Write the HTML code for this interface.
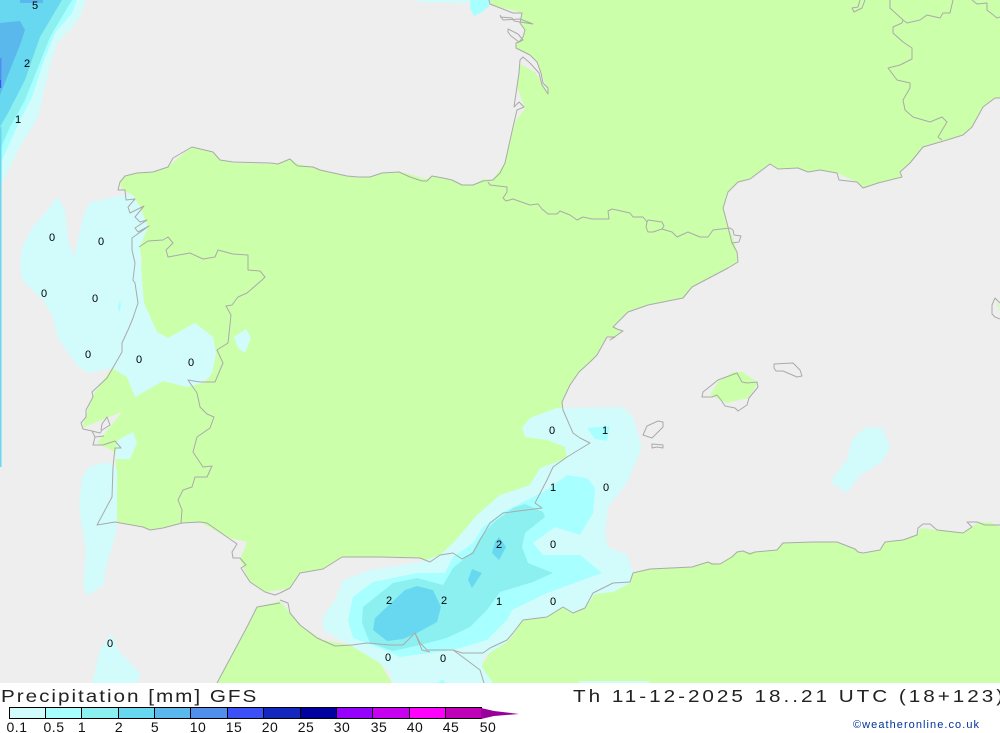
<!DOCTYPE html>
<html>
<head>
<meta charset="utf-8">
<title>Precipitation GFS</title>
<style>
html,body{margin:0;padding:0;background:#fff;width:1000px;height:733px;overflow:hidden}
svg{display:block}
.l{font:11px "Liberation Sans",sans-serif;fill:#000;text-anchor:middle}
.t{font:18px "Liberation Sans",sans-serif;fill:#222}
.k{font:14px "Liberation Sans",sans-serif;fill:#111;text-anchor:middle;letter-spacing:.5px}
.c{fill:none;stroke:#aaa;stroke-width:1;stroke-linejoin:round}
</style>
</head>
<body>
<svg width="1000" height="733" viewBox="0 0 1000 733" xmlns="http://www.w3.org/2000/svg">
<rect width="1000" height="733" fill="#fff"/>
<rect width="1000" height="683" fill="#eee"/>

<!-- land -->
<g fill="#cfa">
<path d="M490 0L492 6L512 10L522 13L520 23L525 30L523 37L519 42L516 43L516 48L530 55L536 60L543 78L549 93L535 72L520 64L517 87L525 108L515 122L508 150L505 163L492 180L483 179L473 185L462 185L452 180L443 178L432 176L427 179L422 178L410 174L399 172L382 173L370 177L358 178L347 176L320 170L313 167L298 164L290 159L279 164L233 163L220 160L213 152L192 147L178 158L168 167L153 172L137 173L125 176L120 182L122 190L133 195L140 207L148 227L139 245L142 260L140 270L142 280L144 303L157 332L168 338L195 323L213 337L216 353L212 373L205 382L187 387L163 381L135 397L127 377L112 368L93 395L82 428L122 412L97 443L115 452L117 480L117 522L143 527L150 530L163 528L182 523L200 522L227 537L247 542L240 560L250 582L265 592L280 590L290 588L300 573L323 569L342 557L380 557L420 558L430 562L440 555L453 553L462 559L473 553L480 540L490 523L503 513L542 508L535 503L547 480L553 467L567 457L590 443L580 438L573 433L563 410L562 402L570 385L579 372L590 362L597 355L607 337L615 337L623 331L613 327L628 312L648 305L683 298L692 287L728 268L738 262L737 252L734 240L727 223L724 208L728 192L738 182L750 179L770 164L778 169L798 168L808 172L820 170L837 173L857 182L863 188L878 183L902 177L900 172L910 163L923 147L947 140L963 135L972 127L983 107L995 98L1000 98L1000 0Z"/>
<path d="M217 683L257 607L280 601L290 613L300 625L323 640L350 645L380 663L392 683Z"/>
<path d="M1000 527L1000 683L483 683L482 665L490 652L507 640L513 633L523 620L547 617L563 607L573 613L585 608L593 593L613 583L630 577L635 572L650 569L692 567L708 562L720 564L737 552L755 552L777 550L783 543L813 542L837 542L857 550L863 554L880 550L885 542L903 540L917 534L921 528L937 530L963 533L972 527L977 523L990 522Z"/>
<path d="M710 395L718 382L733 372L743 372L758 383L748 398L727 403Z"/>
<path d="M996 302L999 304L1000 312Z"/>
</g>

<!-- rain: 0.1 -->
<g fill="#d2fbfb">
<path d="M0 0L86 0L80 17L70 30L57 43L48 73L38 117L20 147L7 173L0 187Z"/>
<path d="M58 197L65 210L68 240L74 257L83 217L90 202L125 195L133 195L140 208L148 227L140 247L142 280L144 303L157 332L168 338L195 323L213 337L216 353L212 373L203 383L187 387L163 381L135 397L127 377L112 368L87 373L77 365L57 337L53 317L43 300L22 280L20 263L22 247L33 227Z"/>
<path d="M234 337L246 329L251 338L245 353L238 348Z"/>
<path d="M118 440L133 432L137 443L130 459L115 459L117 445Z"/>
<path d="M88 468L100 463L112 463L117 470L117 520L115 537L107 563L103 585L88 596L83 587L86 553L79 507L82 477Z"/>
<path d="M112 633L118 650L140 673L138 683L92 683L100 650Z"/>
<path d="M833 478L847 460L853 438L867 427L882 428L890 447L882 462L860 475L847 493L832 483Z"/>
<path d="M522 428L530 418L557 408L623 407L633 417L642 447L627 483L608 507L605 533L608 547L627 555L633 572L630 583L613 592L595 594L585 608L573 613L563 607L547 617L523 620L513 635L507 642L483 657L482 667L493 683L392 683L390 672L380 663L350 645L323 630L323 617L335 600L343 580L370 570L420 562L440 555L453 543L467 527L477 515L500 495L530 485L540 468L567 458L565 447L547 440L525 437Z"/>
<path d="M415 0L470 0L465 3L420 2Z"/>
<path d="M578 683L650 683L648 681L580 681Z"/>
</g>

<!-- rain: 0.5 -->
<g fill="#a8ffff">
<path d="M0 0L77 0L72 13L55 33L43 63L32 97L20 120L2 160L0 165Z"/>
<path d="M470 0L491 0L489 6L482 12L474 16L470 8Z"/>
<path d="M120 300L121 306L119 312L118 306Z"/>
<path d="M587 428L610 426L607 441L595 439Z"/>
<path d="M567 475L587 478L595 488L593 513L580 535L555 527L533 543L543 555L580 555L602 573L547 593L512 610L507 620L487 640L453 650L400 657L380 648L353 638L348 620L353 597L373 582L417 573L445 573L453 557L473 543L483 527L503 512L533 497L547 490Z"/>
<path d="M438 683L442 679L446 683Z"/>
</g>

<!-- rain: 1 -->
<g fill="#8cf0f0">
<path d="M0 0L72 0L63 15L50 37L37 70L25 100L10 127L0 150Z"/>
<path d="M525 504L543 512L545 517L525 533L522 547L528 563L553 573L533 582L500 592L487 610L470 627L447 638L420 645L393 651L370 643L362 623L363 607L393 583L417 578L443 585L453 568L472 552L480 538L493 523L513 508Z"/>
</g>

<!-- rain: 2 -->
<g fill="#68d8f0">
<path d="M0 0L62 0L40 37L25 80L8 113L0 127Z"/>
<path d="M417 586L433 590L441 607L437 622L417 633L403 639L387 641L373 630L375 618L405 590Z"/>
<path d="M499 537L506 547L499 560L492 553L495 542Z"/>
<path d="M472 569L482 573L472 588L468 580Z"/>
<rect x="0" y="127" width="1.5" height="340"/>
</g>

<!-- rain: 5+ -->
<g fill="#5ab8ec">
<path d="M0 23L20 21L25 30L20 45L0 95Z"/>
<rect x="20" y="0" width="23" height="3"/>
</g>
<rect x="0" y="58" width="1.5" height="30" fill="#5090ec"/>
<rect x="0" y="80" width="1" height="8" fill="#3c50f8"/>

<!-- outlines -->
<g class="c">
<path d="M489 0L490 4L513 13L522 13L520 23L525 30L523 37L519 42L516 43L516 48L530 55L537 62L541 73L543 83L548 88L548 94L542 85L539 73L530 63L523 57L520 60L519 73L515 100L514 107L519 102L524 107L517 110L513 127L505 163L500 173L493 180L483 181L473 185L462 185L452 180L443 178L432 176L427 181L422 181L410 177L399 172L382 173L370 177L358 177L347 176L320 170L313 167L298 166L295 164L290 159L278 164L270 163L233 162L220 160L213 152L192 147L173 158L168 167L153 172L137 173L125 176L120 182L118 190L125 190L126 200L135 199L128 207L130 213L144 206L135 217L140 222L147 220L135 228L138 232L149 226L132 238L132 250L135 263L133 280L135 283L138 303L133 318L128 330L122 343L122 352L107 378L92 392L93 397L86 410L86 417L81 423L83 429L92 431L95 437L93 445L103 445L115 441L121 448L115 448L113 467L112 497L97 525L115 522L143 527L150 530L163 528L182 523L200 522L207 523L227 537L237 544L232 552L233 558L240 558L246 565L241 568L250 582L265 592L275 595L280 593L290 588L300 573L323 569L342 557L380 557L420 558L430 562L440 555L453 553L462 559L473 553L480 540L490 523L503 513L542 508L535 503L547 480L553 467L567 457L590 443L580 438L573 433L563 410L562 402L570 385L579 372L590 362L597 355L607 337L615 337L610 340L623 331L617 329L613 327L628 312L648 305L683 298L692 287L728 268L738 262L737 252L732 243L727 223L723 208L728 192L738 182L750 179L770 164L778 169L798 168L808 172L820 170L837 173L839 180L857 182L863 188L878 183L902 177L900 172L910 163L923 147L947 140L963 135L972 127L983 107L995 98L1000 98"/>
<path d="M92 431L100 433L102 430L110 425L107 417L102 424L101 430M95 437L104 436"/>
<path d="M139 247L148 241L163 240L168 237L173 243L166 250L168 257L190 253L203 259L215 257L218 250L233 254L248 255L248 270L260 271L265 277L262 280L247 293L238 297L232 305L226 306L231 315L228 343L217 350L223 363L215 382L200 382L188 380L197 393L200 407L207 414L214 417L210 428L197 437L193 452L203 467L212 466L207 477L195 477L192 487L183 490L178 500L182 510L181 523"/>
<path d="M488 182L490 185L507 187L507 192L503 198L506 201L513 199L530 205L538 204L542 209L548 214L557 214L560 211L570 215L577 220L583 217L592 219L609 219L608 211L612 209L630 213L633 217L643 217L647 222L646 227L648 232L653 232L662 229L664 226L662 222L648 220L647 222M662 229L672 232L677 237L688 232L700 237L708 237L713 230L730 228L733 230L734 235L741 236L739 242L732 243"/>
<path d="M500 15L503 20L520 19L533 24L514 21L512 18L500 17"/>
<path d="M508 29L518 34L523 40L519 42L511 36L508 32Z"/>
<path d="M280 600L288 603L290 613L300 625L317 638L335 646L352 645L367 643L390 645L403 645L415 633L420 643L427 650L453 650L460 655L480 670L484 683"/>
<path d="M257 607L280 603M257 607L247 627L217 683"/>
<path d="M415 633L422 650L430 652"/>
<path d="M483 653L490 648L507 640L513 633L523 620L547 617L563 607L573 613L585 608L593 593L613 583L630 582L633 573L650 569L692 567L708 562L712 564L720 564L732 557L737 552L743 551L750 554L755 552L777 550L783 543L813 542L837 542L855 549L858 552L863 553L880 550L885 542L903 540L917 535L918 528L923 524L930 524L937 530L963 533L972 527L967 522L977 522L985 525L1000 525"/>
<path d="M453 650L462 653L483 653"/>
<path d="M702 397L703 392L718 380L737 373L742 382L747 383L757 382L758 387L749 398L747 405L738 411L735 408L725 406L721 400L717 395L712 397Z"/>
<path d="M774 364L793 363L800 370L802 376L797 377L783 371L776 371L774 368Z"/>
<path d="M663 422L663 427L652 438L643 435L647 426L658 421Z"/>
<path d="M652 444L663 445L663 448L657 447L652 448Z"/>
<path d="M890 0L890 8L903 20L902 23L893 27L893 33L903 42L912 48L912 59L900 65L888 68L897 80L910 83L910 88L903 100L905 110L913 117L930 122L942 117L947 122L938 137L942 140"/>
<path d="M903 20L907 23L920 20L927 15L940 18L943 13L950 13L953 0"/>
<path d="M972 0L977 4L987 3L987 10L997 18L1000 17"/>
<path d="M865 0L862 8L854 12L852 8L858 7L860 0"/>
<path d="M1000 319L995 317L992 314L992 305L995 298L1000 303"/>
</g>

<!-- contour labels -->
<g class="l">
<text x="35" y="9">5</text><text x="27" y="67">2</text><text x="18" y="123">1</text>
<text x="52" y="241">0</text><text x="101" y="245">0</text><text x="44" y="297">0</text><text x="95" y="302">0</text>
<text x="88" y="358">0</text><text x="139" y="363">0</text><text x="191" y="366">0</text>
<text x="552" y="434">0</text><text x="605" y="434">1</text><text x="553" y="491">1</text><text x="606" y="491">0</text>
<text x="499" y="548">2</text><text x="553" y="548">0</text><text x="389" y="604">2</text><text x="444" y="604">2</text>
<text x="499" y="605">1</text><text x="553" y="605">0</text><text x="388" y="661">0</text><text x="443" y="662">0</text>
<text x="110" y="647">0</text>
</g>

<!-- footer -->
<rect x="0" y="683" width="1000" height="50" fill="#fff"/>
<text class="t" transform="translate(1 702) scale(1.15 1)" x="0" y="0" textLength="222" lengthAdjust="spacing">Precipitation [mm] GFS</text>
<text class="t" transform="translate(573 702) scale(1.15 1)" x="0" y="0" textLength="374" lengthAdjust="spacing">Th 11-12-2025 18..21 UTC (18+123)</text>
<text x="853" y="728" textLength="126" lengthAdjust="spacing" style="font:11px 'Liberation Sans',sans-serif;fill:#003399">©weatheronline.co.uk</text>

<!-- colour bar -->
<g stroke="#000" stroke-width="1" shape-rendering="crispEdges">
<rect x="9.5" y="707.5" width="36" height="11" fill="#d2fbfb"/>
<rect x="45.5" y="707.5" width="36" height="11" fill="#a8ffff"/>
<rect x="81.5" y="707.5" width="37" height="11" fill="#8cf0f0"/>
<rect x="118.5" y="707.5" width="36" height="11" fill="#68d8f0"/>
<rect x="154.5" y="707.5" width="36" height="11" fill="#5ab8ec"/>
<rect x="190.5" y="707.5" width="37" height="11" fill="#5090ec"/>
<rect x="227.5" y="707.5" width="36" height="11" fill="#3c50f8"/>
<rect x="263.5" y="707.5" width="37" height="11" fill="#1428c0"/>
<rect x="300.5" y="707.5" width="36" height="11" fill="#0000a0"/>
<rect x="336.5" y="707.5" width="36" height="11" fill="#9600fe"/>
<rect x="372.5" y="707.5" width="37" height="11" fill="#c800f0"/>
<rect x="409.5" y="707.5" width="36" height="11" fill="#ff00ff"/>
<rect x="445.5" y="707.5" width="36" height="11" fill="#c000b8"/>
</g>
<path d="M481 708L494 711L519 714L494 716L481 719Z" fill="#990099"/>

<g class="k">
<text x="17" y="732">0.1</text><text x="54" y="732">0.5</text><text x="82" y="732">1</text>
<text x="119" y="732">2</text><text x="155" y="732">5</text><text x="198" y="732">10</text>
<text x="234" y="732">15</text><text x="270" y="732">20</text><text x="306" y="732">25</text>
<text x="342" y="732">30</text><text x="379" y="732">35</text><text x="415" y="732">40</text>
<text x="451" y="732">45</text><text x="488" y="732">50</text>
</g>
</svg>
</body>
</html>
